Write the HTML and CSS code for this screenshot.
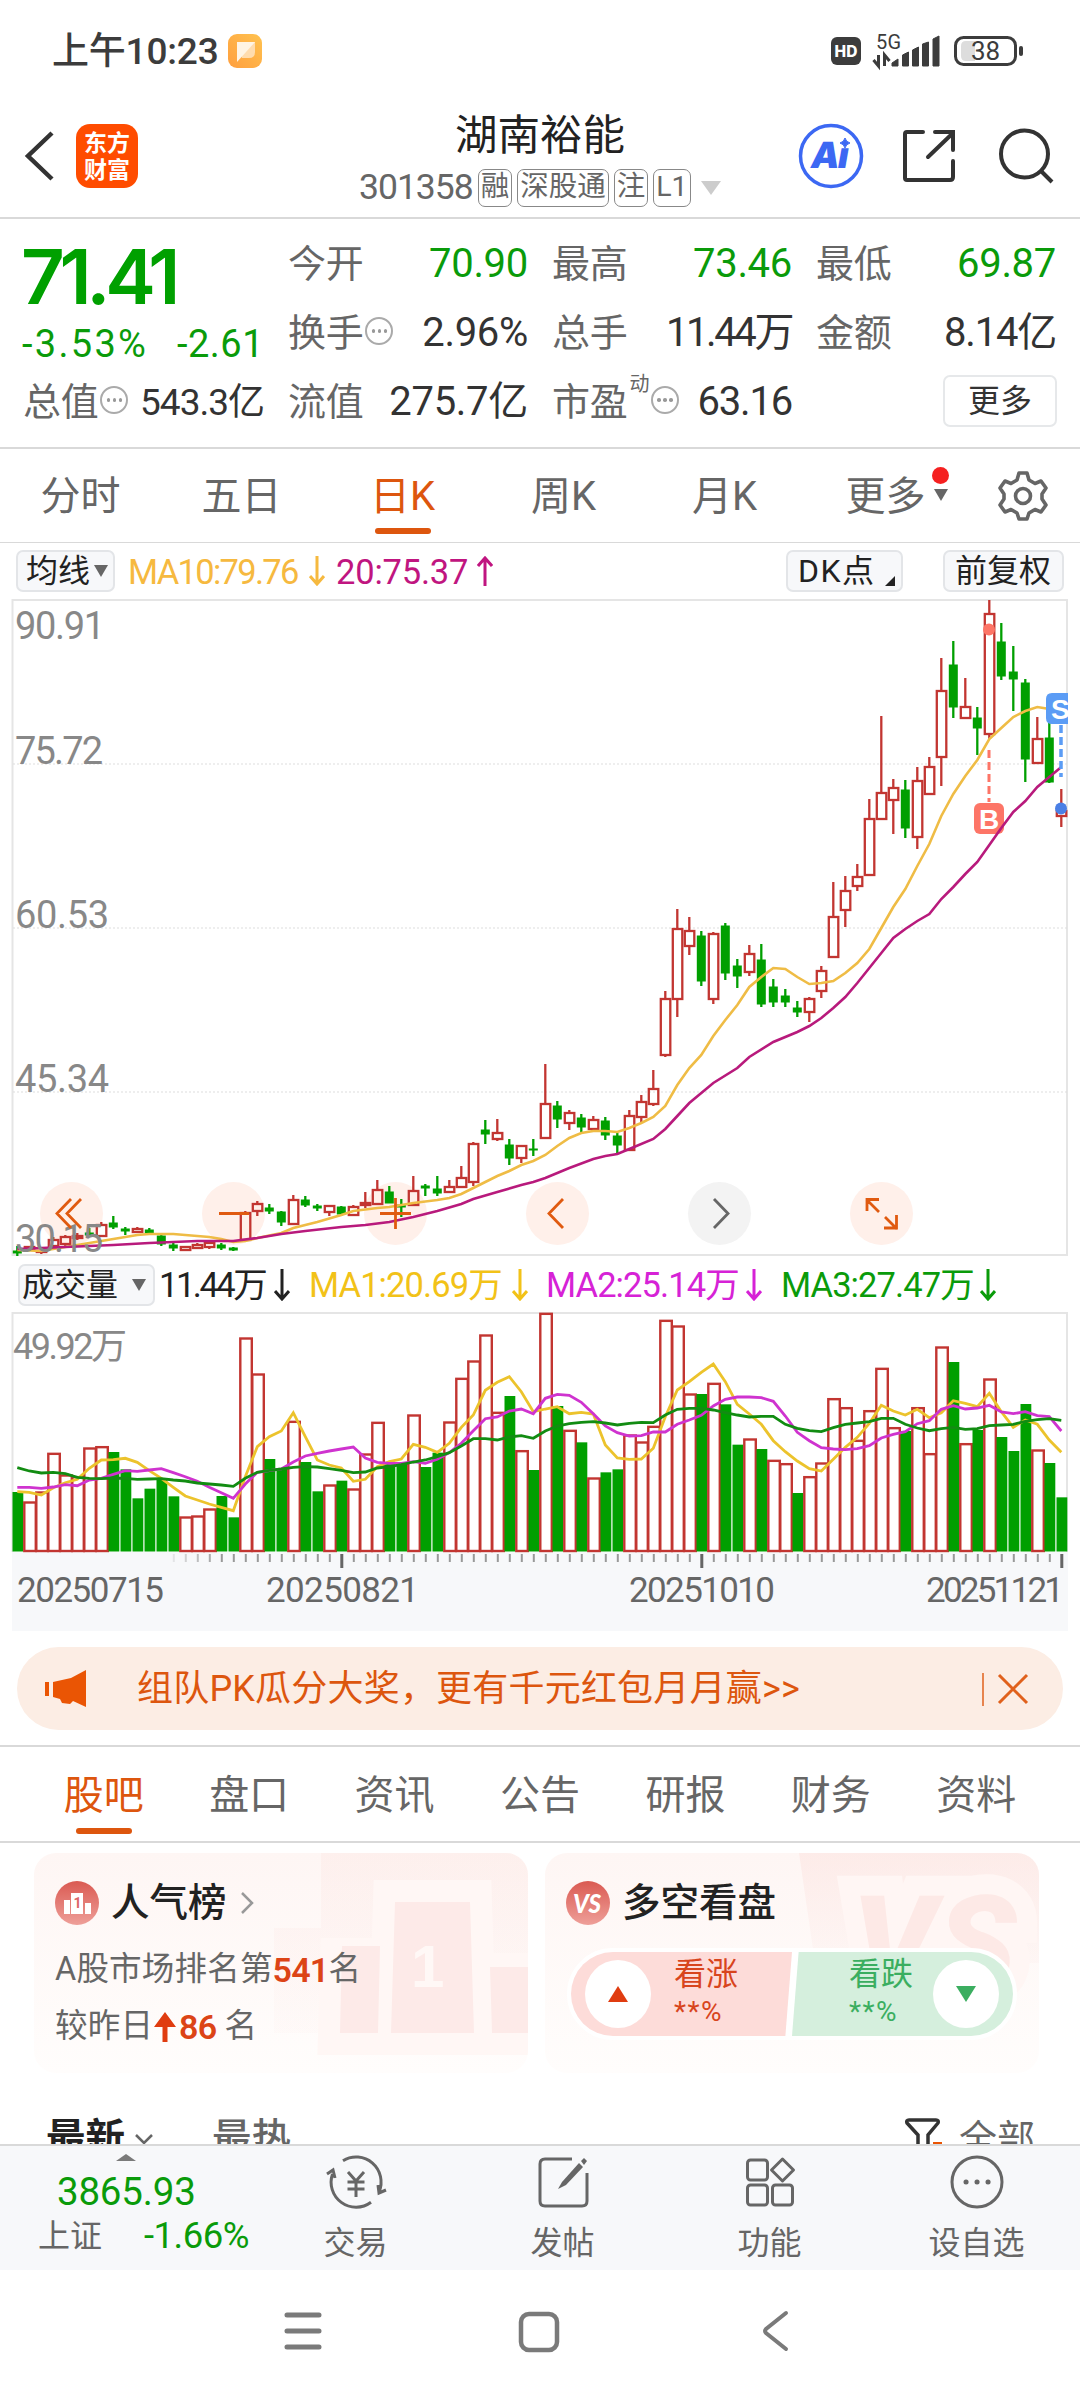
FILE: index.html
```html
<!DOCTYPE html>
<html lang="zh-CN">
<head>
<meta charset="utf-8">
<title>湖南裕能 301358</title>
<link rel="stylesheet" href="styles.css">
</head>
<body>
<div class="status">
  <span class="clock">上午10:23</span>
  <svg class="note" width="34" height="34" viewBox="0 0 34 34"><defs><linearGradient id="gn" x1="0" y1="1" x2="1" y2="0"><stop offset="0" stop-color="#ff9f3f"/><stop offset="1" stop-color="#ffc24f"/></linearGradient></defs><rect width="34" height="34" rx="9" fill="url(#gn)"/><path d="M9 8h18v10q0 6-6 6h-7z" fill="#ffdcae"/><path d="M9 8h18L9 28z" fill="#fff4e4"/></svg>
  <svg class="signals" width="200" height="40" viewBox="826 31 200 40">
    <rect x="831" y="37" width="30" height="28" rx="6" fill="#3c3c3c"/><text class="hd" x="846" y="57" text-anchor="middle">HD</text>
    <text class="fiveg" x="876" y="49" textLength="25">5G</text>
    <path d="M878.500 55v11l-5-6M884.500 66V55l5 6" fill="none" stroke="#3c3c3c" stroke-width="3"/>
    <path d="M892 66v-3l6-4v7zM902.500 66V55l6-3v14zM912.500 66V50l6-3v19zM922.500 66V44l6-2v24zM933 66V39l6-3v30z" fill="#3c3c3c" stroke="#3c3c3c" stroke-width="1" stroke-linejoin="round"/>
    <rect x="955.500" y="37.500" width="60" height="27" rx="8" fill="#fff" stroke="#3c3c3c" stroke-width="3"/><path d="M966 41h9v20h-9q-5 0-5-5v-10q0-5 5-5z" fill="#ddd"/><path d="M1021 48v6" stroke="#3c3c3c" stroke-width="4" stroke-linecap="round"/>
    <text class="batt" x="985.500" y="60" text-anchor="middle">38</text>
  </svg>
</div>

<header class="head">
  <div class="head-left">
    <svg width="32" height="52" viewBox="0 0 32 52"><path d="M28 3L4 26l24 23" fill="none" stroke="#333" stroke-width="4.500"/></svg>
    <div class="applogo"><span>东方</span><span>财富</span></div>
  </div>
  <div class="head-mid">
    <div class="name">湖南裕能</div>
    <div class="code"><span class="num">301358</span><b>融</b><b>深股通</b><b>注</b><b>L1</b><svg width="20" height="14" viewBox="0 0 20 14"><path d="M0 0h20L10 14z" fill="#ccc"/></svg></div>
  </div>
  <div class="head-right">
    <svg width="66" height="66" viewBox="798 123 66 66"><circle cx="831" cy="156" r="30.500" fill="none" stroke="#3c68f3" stroke-width="3.500"/><g transform="translate(29 0) skewX(-10)"><text class="ai" x="810" y="168">A</text><text class="ai" x="837" y="168">ı</text></g><path d="M845 138q1 4 5 5q-4 1-5 5q-1-4-5-5q4-1 5-5z" fill="#3c68f3" stroke="#3c68f3" stroke-width="1"/></svg>
    <svg width="60" height="60" viewBox="901 126 60 60"><path d="M924 132h-16q-2 0-2 2v44q0 2 2 2h43q3 0 3-3v-16M929 157l25-24M936 132h18v18" fill="none" stroke="#333" stroke-width="4" stroke-linecap="round"/></svg>
    <svg width="62" height="62" viewBox="994 124 62 62"><circle cx="1023.500" cy="153" r="23.500" fill="none" stroke="#333" stroke-width="4"/><path d="M1040 170l11 11" stroke="#333" stroke-width="4"/></svg>
  </div>
</header>

<section class="quote">
  <div class="col first">
    <div class="price">71.41</div>
    <div class="row down small"><span>-3.53%</span><span>-2.61</span></div>
    <div class="row third"><label>总值</label><i class="dots"></i><span class="tight">543.3亿</span></div>
  </div>
  <div class="col">
    <div class="row down"><label>今开</label><span>70.90</span></div>
    <div class="row"><label>换手</label><i class="dots"></i><span>2.96%</span></div>
    <div class="row"><label>流值</label><span>275.7亿</span></div>
  </div>
  <div class="col">
    <div class="row down"><label>最高</label><span>73.46</span></div>
    <div class="row"><label>总手</label><span class="ones">11.44万</span></div>
    <div class="row"><label>市盈</label><sup>动</sup><i class="dots"></i><span class="tight2">63.16</span></div>
  </div>
  <div class="col">
    <div class="row down"><label>最低</label><span>69.87</span></div>
    <div class="row"><label>金额</label><span class="tight2">8.14亿</span></div>
    <div class="row"><button class="more">更多</button></div>
  </div>
</section>

<nav class="periods">
  <a>分时</a><a>五日</a><a class="on">日K</a><a>周K</a><a>月K</a><a class="menu">更多<i class="dot"></i><i class="tri"></i></a>
  <svg width="52" height="52" viewBox="0 0 52 52" fill="none" stroke="#666" stroke-width="3.600" stroke-linejoin="round"><path d="M22 3h8l2 7 6 3.500 6-2.500 5 7-4 6v5l4 6-5 7-6-2.500-6 3.500-2 6h-8l-2-6-6-3.500-6 2.500-5-7 4-6v-5l-4-6 5-7 6 2.500 6-3.500z"/><circle cx="26" cy="26" r="7.500"/></svg>
</nav>

<div class="legend top">
  <button class="chip">均线<i class="tri"></i></button>
  <span class="ma m1">MA10:79.76</span><svg class="arr y" viewBox="0 0 16 30"><path d="M8 0v28M1 20l7 8 7-8"/></svg>
  <span class="ma m2">20:75.37</span><svg class="arr p" viewBox="0 0 16 30"><path d="M8 30V2M1 10l7-8 7 8"/></svg>
  <button class="chip dk">DK点<i class="corner"></i></button>
  <button class="chip fq">前复权</button>
</div>

<svg id="kline" class="kline" viewBox="0 599 1080 658" width="1080" height="658"></svg>

<div class="legend vol">
  <button class="chip">成交量<i class="tri"></i></button>
  <span class="ma v0">11.44万</span><svg class="arr" viewBox="0 0 16 32"><path d="M8 0v30M1 22l7 8 7-8"/></svg>
  <span class="ma v1">MA1:20.69万</span><svg class="arr v1c" viewBox="0 0 16 32"><path d="M8 0v30M1 22l7 8 7-8"/></svg>
  <span class="ma v2">MA2:25.14万</span><svg class="arr v2c" viewBox="0 0 16 32"><path d="M8 0v30M1 22l7 8 7-8"/></svg>
  <span class="ma v3">MA3:27.47万</span><svg class="arr v3c" viewBox="0 0 16 32"><path d="M8 0v30M1 22l7 8 7-8"/></svg>
</div>

<svg id="volume" class="volume" viewBox="0 1312 1080 319" width="1080" height="319"></svg>

<div class="banner">
  <svg width="44" height="40" viewBox="44 1669 44 40" fill="#ea5504"><path d="M45 1682h4v14h-4zM53 1682l18-4 15-8v37l-13-6-3 3-8-1-2-4-7-2z"/></svg>
  <span>组队PK瓜分大奖，更有千元红包月月赢&gt;&gt;</span>
  <svg width="48" height="36" viewBox="982 1670 48 36" fill="none" stroke="#e0611c"><path d="M983 1672v33" stroke-width="1.500"/><path d="M999 1674l28 28M1027 1674l-28 28" stroke-width="3"/></svg>
</div>

<nav class="sections">
  <a class="on">股吧</a><a>盘口</a><a>资讯</a><a>公告</a><a>研报</a><a>财务</a><a>资料</a>
</nav>

<div class="cards">
  <div class="card">
    <svg class="deco" width="494" height="220" viewBox="34 1853 494 220"><defs><linearGradient id="fade" x1="0" y1="0" x2="0" y2="1"><stop offset="0" stop-color="#fbdcd8" stop-opacity=".55"/><stop offset="1" stop-color="#fbe2df" stop-opacity=".2"/></linearGradient></defs><path d="M321 1853h207v180h-254v-105h47z" fill="url(#fade)" opacity=".45"/><g stroke="#fff7f5" stroke-width="44" fill="#fff7f5"><path d="M395 1902h75l4 131h-83zM342 1960h38l-2 73h-38zM494 1975h32v58h-34z"/></g><path d="M395 1902h75l4 131h-83zM342 1946h38l-2 87h-38zM490 1967h38v66h-36z" fill="#fdeae8"/><text class="decoone" x="411" y="1987">1</text></svg>
    <h3><svg width="44" height="44" viewBox="0 0 44 44"><defs><linearGradient id="gi" x1="0" y1="0" x2="0" y2="1"><stop offset="0" stop-color="#da5a52"/><stop offset="1" stop-color="#ee9f99"/></linearGradient></defs><circle cx="22" cy="22" r="22" fill="url(#gi)"/><path d="M9 19h6v14H9zM30 22h6v11h-6z" fill="#fff"/><path d="M16 12h12v21H16z" fill="#fff"/><text class="ione" x="18.500" y="27">1</text></svg>人气榜<svg class="go" width="14" height="24" viewBox="0 0 14 24"><path d="M2 2l10 10L2 22" fill="none" stroke="#999" stroke-width="2.500"/></svg></h3>
    <p>A股市场排名第<em>541</em>名</p>
    <p>较昨日<svg width="22" height="30" viewBox="0 0 22 30"><path d="M11 0l11 15H13.500v15h-5V15H0z" fill="#e03c10"/></svg><em>86</em> 名</p>
  </div>
  <div class="card">
    <svg class="deco" width="494" height="220" viewBox="545 1853 494 220"><path d="M799 1853h240v110H815z" fill="url(#fade)" opacity=".75"/><text class="decovs" x="852" y="1988">VS</text></svg>
    <h3><svg width="44" height="44" viewBox="0 0 44 44"><circle cx="22" cy="22" r="22" fill="url(#gi)"/><text class="ivs" x="7" y="32" textLength="28" lengthAdjust="spacingAndGlyphs">VS</text></svg>多空看盘</h3>
    <div class="pill">
      <div class="side up"><i><svg width="22" height="18" viewBox="0 0 22 18"><path d="M11 1l10 16H1z"/></svg></i><div><strong>看涨</strong><span>**%</span></div></div>
      <div class="side dn"><div><strong>看跌</strong><span>**%</span></div><i><svg width="22" height="18" viewBox="0 0 22 18"><path d="M1 1h20L11 17z"/></svg></i></div>
    </div>
  </div>
</div>

<div class="sort">
  <b>最新</b><svg class="caret" width="20" height="14" viewBox="0 0 20 14"><path d="M2 2l8 8 8-8" fill="none" stroke="#666" stroke-width="2.500"/></svg><b class="hot">最热</b>
  <svg class="filter" width="38" height="34" viewBox="0 0 38 34"><path d="M14 34V17L3 5q-1-3 2-3h27q3 0 2 3L24 17v17" fill="none" stroke="#333" stroke-width="3.500"/><path d="M29 24h9v6h-9z" fill="#ea5504"/></svg>
  <span>全部</span>
</div>

<footer class="bar">
  <div class="index"><i class="up"></i><div class="val">3865.93</div><div class="chg"><span>上证</span><span class="pct">-1.66%</span></div></div>
  <div class="item"><svg width="62" height="56" viewBox="324 2153 62 56" fill="none" stroke="#666" stroke-width="3"><path d="M342 2160.700a25 25 0 0 1 36 31.300M370 2202.300a25 25 0 0 1-38.500-28.300M326 2174l6-4 2 8M385 2190l-7 3-1-8M347 2172l8 9 8-9M355 2181v16M346.500 2182h17M346.500 2189h17"/></svg>交易</div>
  <div class="item"><svg width="54" height="56" viewBox="535 2153 54 56" fill="none" stroke="#666" stroke-width="3"><path d="M571 2159h-27q-5 0-5 5v37q0 5 5 5h37q5 0 5-5v-28"/><path d="M557 2189l4-7 17-19 4 4-17 18z" fill="#666" stroke="none"/><path d="M580 2161l3-3 3 3-3 4z" fill="#666" stroke="none"/></svg>发帖</div>
  <div class="item"><svg width="54" height="56" viewBox="742 2153 54 56" fill="none" stroke="#666" stroke-width="3"><rect x="746.500" y="2160" width="20" height="20" rx="3"/><rect x="746.500" y="2185" width="20" height="20" rx="3"/><rect x="771.500" y="2185" width="20" height="20" rx="3"/><path d="M781.500 2159l11 11-11 11-11-11z" stroke-linejoin="round"/></svg>功能</div>
  <div class="item"><svg width="54" height="56" viewBox="949 2153 54 56" fill="none" stroke="#666" stroke-width="3"><circle cx="976" cy="2182" r="25"/><path d="M965 2182h.1M976 2182h.1M987 2182h.1" stroke-width="5" stroke-linecap="round"/></svg>设自选</div>
</footer>

<div class="sysnav">
  <svg width="40" height="42" viewBox="0 0 40 42" stroke="#7a7a7a" stroke-width="5" stroke-linecap="round"><path d="M4 5h32M4 21h32M4 37h32"/></svg>
  <svg width="44" height="44" viewBox="0 0 44 44"><rect x="4" y="4" width="36" height="36" rx="8" fill="none" stroke="#7a7a7a" stroke-width="4.500"/></svg>
  <svg width="28" height="42" viewBox="0 0 28 42"><path d="M25 3L5 19q-2 2 0 4l20 16" fill="none" stroke="#7a7a7a" stroke-width="4" stroke-linecap="round"/></svg>
</div>
<script src="chart.js"></script>
</body>
</html>
```

FILE: styles.css
```css
* { box-sizing: border-box; }
body {
  margin: 0; width: 1080px; height: 2400px; overflow: hidden; background: #fff; color: #333;
  font-family: Roboto, "Noto Sans CJK SC", sans-serif; font-size: 38px; line-height: 1;
  display: flex; flex-direction: column;
}
body > * { flex: none; }
button { font: inherit; color: inherit; padding: 0; margin: 0; }
svg { display: block; flex: none; }
i { font-style: normal; }

.status { height: 105px; padding: 0 54px 4px 52px; display: flex; align-items: center; color: #3c3c3c; }
.clock { font-size: 37px; font-weight: 500; letter-spacing: -.2px; width: 176px; white-space: nowrap; padding-top: 2px; }
.signals { margin-left: auto; }
.hd { font: 800 15.500px Inter, sans-serif; fill: #fff; }
.fiveg { font-size: 20px; fill: #3c3c3c; }
.batt { font-size: 26px; fill: #3c3c3c; }

.head { height: 114px; display: grid; grid-template-columns: 330px 1fr 330px; border-bottom: 2px solid #d9d9d9; }
.head-left { display: flex; align-items: center; padding: 0 0 10px 24px; gap: 20px; }
.applogo { width: 62px; height: 64px; border-radius: 14px; background: #ff4c00; color: #fff; font: 700 23px/27px "Noto Sans CJK SC", sans-serif; display: flex; flex-direction: column; align-items: center; justify-content: center; padding-bottom: 3px; }
.head-mid { display: flex; flex-direction: column; align-items: center; padding-top: 7px; }
.name { font-size: 42.5px; line-height: 48px; color: #222; }
.code { display: flex; align-items: center; gap: 5px; margin-top: 9px; color: #666; width: 362px; white-space: nowrap; }
.code .num { font-size: 35.500px; letter-spacing: -1px; }
.code b { font-weight: 400; font-size: 28.500px; line-height: 34px; height: 38px; border: 1.500px solid #888; border-radius: 7px; padding: 0 2px; }
.code svg { margin-left: 5px; }
.head-right { display: flex; align-items: center; padding: 0 23px 11px 48px; justify-content: space-between; }
.ai { font: 900 36px Inter, sans-serif; fill: #3c68f3; }

.quote { height: 230px; display: grid; grid-template-columns: repeat(4, 240px); gap: 24px; padding: 10px 24px 0; border-bottom: 2px solid #d9d9d9; }
.col { white-space: nowrap; }
.row { height: 69px; display: flex; align-items: center; font-size: 40px; letter-spacing: -.3px; padding-top: 1px; }
.row label { color: #666; font-size: 38px; letter-spacing: -.3px; }
.row > span:last-child { margin-left: auto; }
.row.down > span { color: #0a9b0a; }
.row.small { height: 48px; font-size: 38px; letter-spacing: .5px; margin-left: -2px; }
.row.small span:first-child { letter-spacing: 2.300px; }
.row.third { font-size: 37px; }
.row.third label { margin-left: -1px; }
.tight { letter-spacing: -1px; }
.tight2 { letter-spacing: -1.200px; }
.ones { letter-spacing: -2.400px; }
.price { height: 90px; color: #00a000; font: 600 76px/94px Inter, sans-serif; letter-spacing: -5.300px; margin-left: -3px; }
.dots { width: 28px; height: 28px; border: 2.500px solid #aaa; border-radius: 50%; margin-left: 2px; display: flex; align-items: center; justify-content: center; position: relative; top: -2px; }
.dots::before { content: ""; width: 3.500px; height: 3.500px; border-radius: 50%; background: #999; box-shadow: -6px 0 #999, 6px 0 #999; }
.row sup { font-size: 20px; color: #666; align-self: flex-start; margin: 6px 0 0 2px; }
.more { margin: 0 -1px 2px auto; width: 114px; height: 52px; font-size: 32px; background: #fff; border: 2px solid #e6e8ea; border-radius: 7px; }

.periods { height: 94px; display: flex; align-items: center; font-size: 40px; color: #666; border-bottom: 1px solid #d9d9d9; }
.periods a { width: 161px; height: 93px; display: flex; align-items: center; justify-content: center; position: relative; padding-top: 2px; }
.periods svg { margin-left: 31px; }
.on { color: #dd560e; position: relative; }
.on::after { content: ""; position: absolute; left: 50%; bottom: 7px; width: 56px; height: 6px; margin-left: -28px; border-radius: 3px; background: #dd560e; }
.periods .on::after { bottom: 8px; }
.dot { position: absolute; right: 17px; top: 18px; width: 17px; height: 17px; border-radius: 50%; background: #f52020; }
.tri { border: 7px solid transparent; border-top: 12px solid #666; border-bottom: 0; display: inline-block; }
.menu .tri { position: absolute; right: 18px; top: 40px; }

.legend { display: flex; align-items: center; font-size: 34.500px; white-space: nowrap; }
.legend.top { height: 56px; padding: 0 16px; }
.legend.vol { height: 55px; padding: 0 16px 0 18px; color: #222; }
.chip { height: 42px; border: 2px solid #e3e5e8; border-radius: 7px; background: #f7f8fa; color: #222; font-size: 32px; line-height: 36px; display: flex; align-items: center; position: relative; }
.top .chip { width: 99px; padding-left: 8px; }
.top .chip .tri { margin-left: 4px; }
.vol .chip { width: 137px; padding-left: 2px; }
.vol .chip .tri { margin-left: 14px; }
.top .dk { width: 117px; padding-left: 10px; margin-left: auto; letter-spacing: 1.500px; }
.top .fq { width: 121px; padding-left: 10px; margin-left: 40px; }
.corner { position: absolute; right: 6px; bottom: 4px; border: 5px solid #222; border-left-color: transparent; border-top-color: transparent; }
.ma { display: block; padding-top: 2px; }
.m1 { width: 181px; margin-left: 13px; color: #f6b93f; letter-spacing: -1.700px; }
.m2 { width: 141px; margin-left: 11px; color: #c01580; letter-spacing: -.2px; }
.arr { width: 16px; height: 30px; fill: none; stroke: #222; stroke-width: 3; }
.vol .arr { height: 32px; }
.arr.y { stroke: #f6b93f; }
.arr.p { stroke: #c01580; }
.v0 { width: 115px; margin-left: 4px; letter-spacing: -2.500px; }
.v1, .v2, .v3 { letter-spacing: -.9px; }
.v1 { width: 203px; margin-left: 19px; color: #f2c218; }
.v2 { width: 200px; margin-left: 18px; color: #d622d6; }
.v3 { width: 199px; margin-left: 19px; color: #0a9b0a; }
.v1c { stroke: #f2c218; } .v2c { stroke: #d622d6; } .v3c { stroke: #0a9b0a; }

.kline .lab { font-size: 38px; fill: #888; }
.volume .lab { font-size: 36px; fill: #888; }
.volume .date { font-size: 35px; fill: #666; }
.mark { font: 700 28px "Liberation Sans", sans-serif; fill: #fff; }

.banner { height: 83px; margin: 16px 17px 15px; padding: 0 33px 0 27px; border-radius: 42px; background: #fcede4; display: flex; align-items: center; font-size: 36px; color: #dd560e; }
.banner span { margin: 0 auto 0 49px; letter-spacing: .2px; }
.sections { height: 98px; display: flex; padding: 0 31px; font-size: 40px; color: #666; border-top: 2px solid #d9d9d9; border-bottom: 2px solid #d9d9d9; }
.sections a { flex: 1; display: flex; align-items: center; justify-content: center; padding-top: 3px; }

.cards { display: flex; gap: 17px; padding: 10px 34px 0; }
.card { width: 494px; height: 220px; border-radius: 22px; background: linear-gradient(#fef6f4, #fffdfc); position: relative; overflow: hidden; padding: 28px 22px 0 21px; color: #666; }
.deco { position: absolute; left: 0; top: 0; }
.decoone { font: 700 60px "Liberation Sans", sans-serif; fill: #fff8f6; }
.decovs { font: italic 900 130px Roboto, sans-serif; fill: #fde9e6; letter-spacing: 2px; stroke: #fff6f4; stroke-width: 40px; paint-order: stroke; }
.card h3 { position: relative; margin: 0 0 15px; height: 44px; display: flex; align-items: center; gap: 12px; font-size: 38.500px; line-height: 42px; font-weight: 500; color: #222; }
.go { margin-left: 1px; }
.ione { font: 700 14px Roboto, sans-serif; fill: #d66; }
.ivs { font: italic 900 27px Lato, sans-serif; fill: #fff; }
.card p { position: relative; margin: 0; height: 57px; display: flex; align-items: center; font-size: 32.500px; white-space: pre; padding-top: 2px; letter-spacing: .2px; }
.card em { font-style: normal; font-weight: 600; color: #dc4416; font-size: 34px; letter-spacing: -.8px; }
.card p svg { margin: 0 3px 0 1px; }
.pill { position: absolute; left: 22px; top: 95px; width: 450px; height: 92px; border: 4px solid #fff; border-radius: 46px; overflow: hidden; background: #fff; display: flex; justify-content: space-between; }
.side { width: 223px; height: 84px; display: flex; align-items: center; }
.side.up { background: #fddcd9; color: #d8451d; clip-path: polygon(0 0, 100% 0, 97% 100%, 0 100%); fill: #e03c10; padding-left: 14px; gap: 23px; }
.side.dn { background: #d5efdd; color: #3bae60; clip-path: polygon(3% 0, 100% 0, 100% 100%, 0 100%); fill: #3bae60; padding-right: 14px; gap: 20px; justify-content: flex-end; }
.side i { width: 66px; height: 68px; border-radius: 50%; background: #fff; display: flex; align-items: center; justify-content: center; }
.side strong { display: block; font-weight: 400; font-size: 32px; line-height: 40px; margin-top: -4px; }
.side span { display: block; font-size: 28px; line-height: 36px; letter-spacing: 1.500px; }

.sort { height: 71px; padding: 43px 45px 0 46px; display: flex; font-size: 39.500px; overflow: hidden; color: #222; }
.sort b { font-weight: 600; line-height: 45px; height: 45px; }
.sort .caret { margin: 17px 0 0 9px; }
.sort .hot { margin-left: 58px; color: #666; font-weight: 500; }
.sort .filter { margin: 2px 17px 0 auto; }
.sort span { font-size: 38px; line-height: 46px; color: #666; }

.bar { height: 126px; background: #f7f8fa; border-top: 2px solid #d9d9d9; display: flex; }
.index { width: 252px; position: relative; padding: 25px 0 0 38px; color: #0a9b0a; }
.index .up { position: absolute; left: 116px; top: 8px; border: 10px solid transparent; border-bottom: 7px solid #7a7a7a; border-top: 0; }
.val { font-size: 38.500px; line-height: 42px; padding-left: 19px; letter-spacing: -.2px; }
.chg { display: flex; justify-content: space-between; width: 211px; align-items: center; height: 46px; font-size: 36.500px; letter-spacing: -.5px; }
.chg span:first-child { font-size: 32px; color: #666; letter-spacing: 0; }
.item { width: 207px; display: flex; flex-direction: column; align-items: center; padding-top: 7px; gap: 18px; font-size: 32px; color: #666; }

.sysnav { flex: 1 0 auto; display: grid; grid-template-columns: repeat(3, 236px); justify-content: center; justify-items: center; padding: 40px 2px 0 0; align-items: start; }
```

FILE: chart.js
```js
const RED = '#c23531', GREEN = '#009f00';
const X = i => 17.3 + i * 12;

// One entry per trading day: colour, high, body top, body bottom, low (y positions in the panel).
const days = `g 1246 1251 1253 1256|r 1247 1247 1249 1249|r 1249 1251 1252 1254|r 1237 1240 1246 1246|r 1235 1237 1244 1246|r 1233 1236 1238 1240|g 1228 1233 1235 1237|r 1222 1225 1236 1236|g 1216 1223 1227 1229|g 1227 1229 1231 1235|r 1227 1229 1232 1233|g 1228 1230 1233 1233|g 1235 1236 1244 1246|g 1243 1245 1248 1251|r 1247 1247 1250 1251|r 1243 1245 1248 1249|r 1243 1243 1247 1249|g 1243 1245 1248 1250|g 1247 1248 1250 1251|r 1211 1213 1240 1240|r 1201 1204 1211 1216|g 1204 1208 1211 1214|g 1211 1212 1222 1226|r 1195 1200 1224 1224|g 1196 1200 1205 1207|g 1204 1206 1208 1211|r 1206 1206 1212 1216|g 1206 1207 1214 1216|r 1205 1207 1215 1215|r 1192 1203 1205 1208|r 1180 1190 1204 1204|g 1186 1192 1203 1203|g 1199 1205 1207 1217|r 1176 1191 1205 1205|g 1184 1186 1188 1196|g 1176 1189 1193 1196|r 1180 1187 1192 1193|r 1166 1178 1187 1188|r 1142 1144 1182 1186|g 1120 1130 1134 1144|r 1119 1133 1139 1141|g 1139 1145 1158 1165|r 1145 1146 1158 1163|g 1139 1149 1150 1156|r 1064 1104 1138 1138|g 1101 1106 1119 1128|r 1110 1113 1123 1130|g 1114 1118 1127 1132|r 1116 1120 1129 1129|g 1117 1121 1135 1140|g 1133 1136 1145 1153|r 1110 1116 1150 1150|r 1095 1102 1117 1122|r 1070 1089 1104 1106|r 991 999 1055 1057|r 909 929 999 1017|r 917 931 946 955|g 931 936 981 986|r 932 934 999 1004|g 923 926 973 980|g 959 966 976 988|r 945 954 972 976|g 944 960 1004 1007|g 979 987 1002 1007|g 989 996 1002 1007|g 1001 1008 1012 1017|r 997 999 1012 1022|r 966 971 991 998|r 882 917 957 958|r 876 891 910 927|r 864 877 886 891|r 799 819 875 875|r 716 793 819 819|r 779 788 800 834|g 780 790 828 838|r 767 781 837 849|r 757 767 794 795|r 658 691 757 786|g 641 665 707 718|r 678 707 718 718|g 707 718 728 755|r 600 614 734 739|g 623 642 676 680|g 646 672 679 711|g 679 683 759 782|r 717 739 763 763|g 720 738 782 783|r 789 811 816 827`
  .split('|').map(s => { const p = s.split(' '); return [p[0], ...p.slice(1).map(Number)]; });

const ma10 = '0 1250 2 1251 4 1247 6 1243 8 1239 10 1235 11 1234 13 1234 15 1236 16 1237 17 1239 18 1242 19 1241 20 1238 22 1233 23 1228 25 1222 27 1215 28 1211 30 1208 31 1207 33 1203 35 1200 36 1198 37 1194 38 1188 39 1182 40 1176 41 1171 42 1165 43 1161 44 1155 45 1146 46 1138 47 1133 48 1131 49 1131 50 1132 51 1128 52 1123 53 1117 54 1106 55 1085 56 1068 57 1055 58 1036 59 1020 60 1005 61 987 62 977 63 968 64 969 65 977 66 984 67 983 68 981 69 973 70 963 71 949 72 928 73 907 74 889 75 866 76 844 77 816 78 794 79 776 80 760 81 739 82 728 83 717 84 711 85 707 86 709 87 720';
const ma20 = '0 1249 4 1247 8 1245 11 1243 15 1241 18 1241 20 1238 22 1234 24 1231 27 1227 29 1225 31 1222 33 1217 35 1211 37 1204 38 1199 40 1192 42 1185 43 1182 44 1178 46 1168 48 1159 49 1156 50 1154 51 1149 53 1139 54 1129 55 1116 56 1103 57 1093 58 1083 60 1068 61 1057 63 1042 65 1032 66 1026 67 1018 68 1008 69 997 70 983 71 968 72 953 73 938 74 929 75 921 76 914 77 899 78 887 79 874 80 862 81 845 82 828 83 812 84 801 85 787 86 777 87 767';

function line(src, color) {
  const n = src.split(' ').map(Number), pts = [];
  for (let k = 0; k < n.length; k += 2) pts.push(X(n[k]).toFixed(1) + ',' + n[k + 1]);
  return `<polyline points="${pts.join(' ')}" fill="none" stroke="${color}" stroke-width="2.600"/>`;
}

let k = '<path d="M12.500 600H1067V1255H12.500Z" fill="none" stroke="#e5e5e5" stroke-width="2"/>';
[764, 928, 1092].forEach(y => { k += `<path d="M13 ${y}H1067" stroke="#ddd" stroke-dasharray="2 2"/>`; });
[71.5, 233.5, 395.5, 557.5, 719.5, 881.5].forEach((x, n) => {
  k += `<circle cx="${x}" cy="1213.500" r="31.500" fill="${n === 4 ? '#f3f3f3' : '#fff0ea'}"/>`;
});
days.forEach(([c, h, t, b, l], i) => {
  const x = X(i);
  if (c === 'g') {
    k += `<path d="M${x} ${h}V${l}" stroke="${GREEN}" stroke-width="2.300"/><rect x="${x - 4.500}" y="${t - .5}" width="9" height="${b - t + 1}" fill="${GREEN}"/>`;
  } else {
    k += `<path d="M${x} ${h}V${t}M${x} ${b}V${l}" stroke="${RED}" stroke-width="2.300"/><rect x="${x - 4.500}" y="${t}" width="9.500" height="${b - t}" fill="none" stroke="${RED}" stroke-width="2.300"/>`;
  }
});
k += '<circle cx="989" cy="629.500" r="6" fill="#fd7567"/><path d="M989 750v52" stroke="#fd7567" stroke-width="3" stroke-dasharray="8 4"/><rect x="974" y="803" width="30" height="31" rx="6" fill="#fd7567"/><text class="mark" x="979" y="829">B</text>';
k += line(ma10, '#efbc45') + line(ma20, '#b81a7c');
k += '<path d="M1061 725v52" stroke="#5b9cf5" stroke-width="3.500" stroke-dasharray="8 4"/><circle cx="1061" cy="808.500" r="6" fill="#4a7fe5"/><path d="M1068 693h-16q-6 0-6 6v19q0 6 6 6h16z" fill="#5b9cf5"/><svg x="1040" y="690" width="28" height="40" viewBox="1040 690 28 40"><text class="mark" x="1051" y="719">S</text></svg>';
[['90.91', 639, 90], ['75.72', 764, 88], ['60.53', 928, 94], ['45.34', 1092, 94], ['30.15', 1252, 88]].forEach(([t, y, w]) => {
  k += `<text class="lab" x="15" y="${y}" textLength="${w}">${t}</text>`;
});
k += '<g fill="none" stroke="#e05a10" stroke-width="2.800"><path d="M71 1199l-14 14.500 14 14.500M81 1199l-14 14.500 14 14.500M219 1213.500h30M380 1213.500h31M395.500 1198v31M563 1199l-14 14.500 14 14.500M867 1211v-11.500h12M867 1200l12 12M885 1217l12 12M884 1228h12.500v-13"/><path d="M714 1199l14 14.500-14 14.500" stroke="#666"/></g>';
document.getElementById('kline').innerHTML = k;

// Volume bars and averages are listed in thirds of a pixel below y = 1260.
const Y = v => 1260 + v / 3;
const vols = [696,726,696,580,645,650,564,560,576,628,715,686,655,709,771,768,747,708,772,234,342,597,627,484,606,694,675,662,687,582,487,612,612,465,621,578,486,355,303,225,457,408,572,630,160,438,511,547,654,637,628,525,546,499,181,198,402,402,370,433,554,537,567,601,611,699,650,609,416,443,541,452,325,503,513,443,581,261,306,551,510,357,531,573,432,570,609,712];
const avg = {
  '#ecc32c': [695,697,705,683,668,658,625,600,599,595,607,632,655,682,708,720,732,742,752,650,560,530,513,458,530,600,615,624,664,658,620,605,597,553,562,577,550,502,465,391,367,350,395,455,447,440,461,457,462,555,594,598,597,565,470,390,365,337,312,365,433,462,493,542,575,603,626,633,598,562,532,490,436,453,465,448,473,458,422,430,440,400,455,502,480,493,540,577],
  '#cf33cf': [682,682,685,681,674,677,660,655,643,632,634,630,626,638,650,664,682,698,715,672,637,632,627,606,588,580,573,567,561,594,607,610,610,605,610,598,578,550,512,476,471,453,447,461,415,403,406,427,461,498,518,528,527,516,516,493,480,466,438,418,411,411,413,424,468,517,542,563,567,569,566,557,534,523,515,491,482,448,437,447,444,436,456,461,455,467,470,513],
  '#128c12': [623,633,639,637,641,652,655,656,654,655,658,657,656,660,663,669,672,675,679,655,637,631,627,622,620,621,626,631,638,636,624,620,614,606,600,590,578,558,536,536,540,531,527,535,513,498,491,487,485,489,495,490,487,488,465,448,445,445,450,458,465,471,469,469,493,505,512,515,503,493,489,485,475,475,493,504,512,506,502,508,506,497,495,493,484,479,476,481]
};
// Days whose volume bar is coloured differently from their candle.
const flipped = { 6: 'r', 10: 'g', 39: 'r', 63: 'r', 64: 'r', 87: 'g' };
let v = '<path d="M12.500 1552V1313H1067V1552" fill="none" stroke="#e5e5e5" stroke-width="2"/><rect x="12" y="1552" width="1056" height="79" fill="#f7f8fa"/>';
vols.forEach((z, i) => {
  const x = X(i), y = Y(z), green = (flipped[i] || days[i][0]) === 'g';
  v += green
    ? `<rect x="${x - 4.800}" y="${y}" width="10.800" height="${1551.500 - y}" fill="${GREEN}"/>`
    : `<rect x="${x - 5}" y="${y + .5}" width="11.500" height="${1550.500 - y}" fill="#fff" stroke="${RED}" stroke-width="2.400"/>`;
});
for (const c in avg) v += `<polyline points="${avg[c].map((z, i) => X(i).toFixed(1) + ',' + Y(z).toFixed(1)).join(' ')}" fill="none" stroke="${c}" stroke-width="2.800"/>`;
for (let i = 13; i < 88; i++) {
  const big = i % 30 === 27;
  v += `<path d="M${X(i) + .5} 1554v${big ? 14 : 8}" stroke="${big ? '#666' : '#999'}" stroke-width="${big ? 3 : 2}" opacity="${Math.min(1, (i - 12) / 5)}"/>`;
}
v += '<text class="lab" x="13" y="1359" textLength="114">49.92万</text>';
[['20250715', 17, 147], ['20250821', 266, 153], ['20251010', 629, 146], ['20251121', 926, 138]].forEach(([t, x, w]) => {
  v += `<text class="date" x="${x}" y="1602" textLength="${w}">${t}</text>`;
});
document.getElementById('volume').innerHTML = v;
```
